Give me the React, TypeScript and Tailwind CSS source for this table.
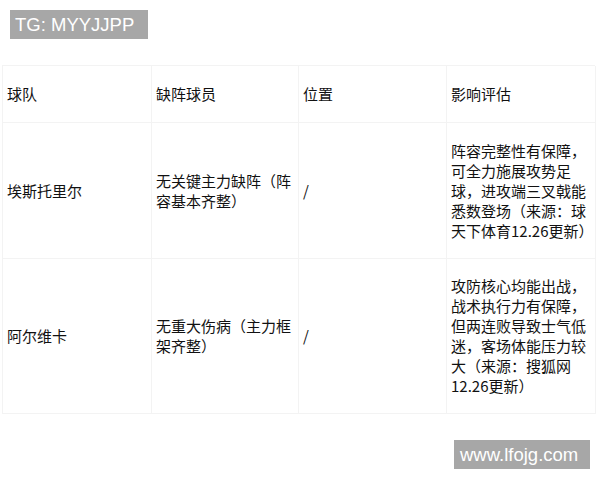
import React from "react";

const cjk = { fontFamily: '"Microsoft YaHei", "Noto Sans CJK SC", "Noto Sans", sans-serif' };

type Row = [string, string, string, string];

const header: Row = ["球队", "缺阵球员", "位置", "影响评估"];
const rows: Row[] = [
  [
    "埃斯托里尔",
    "无关键主力缺阵（阵容基本齐整）",
    "/",
    "阵容完整性有保障，可全力施展攻势足球，进攻端三叉戟能悉数登场（来源：球天下体育12.26更新）",
  ],
  [
    "阿尔维卡",
    "无重大伤病（主力框架齐整）",
    "/",
    "攻防核心均能出战，战术执行力有保障，但两连败导致士气低迷，客场体能压力较大（来源：搜狐网12.26更新）",
  ],
];

function Cells({ row, h }: { row: Row; h: string }) {
  return (
    <>
      {row.map((c, i) => (
        <div
          key={i}
          className={`flex items-center border-r border-b border-[#f3f3f3] pl-[4px] pr-[1px] text-[15px] leading-[20px] text-[#111] ${h}`}
        >
          <span className="block w-full">{c}</span>
        </div>
      ))}
    </>
  );
}

export default function App() {
  return (
    <div className="w-[600px] h-[480px] bg-white overflow-hidden" style={cjk}>
      <div className="pt-[10px] pl-[10px]">
        <div
          className="w-[138px] h-[29px] bg-[#a7a7a7] text-white text-[18.5px] leading-[29px] pl-[5px]"
          style={{ fontFamily: '"Liberation Sans", Arial, sans-serif' }}
        >
          TG: MYYJJPP
        </div>
      </div>
      <div className="mt-[26px] ml-[2px] w-[593px] grid grid-cols-[149px_147px_148px_149px] border-t border-l border-[#f3f3f3]">
        {header.map((c, i) => (
          <div
            key={i}
            className="flex items-center h-[57px] border-r border-b border-[#f3f3f3] pl-[4px] text-[15px] leading-[20px] text-[#111]"
          >
            {c}
          </div>
        ))}
        <Cells row={rows[0]} h="h-[136px]" />
        <Cells row={rows[1]} h="h-[155px]" />
      </div>
      <div className="flex justify-end pr-[10px] mt-[26px]">
        <div
          className="w-[136px] h-[29px] bg-[#a7a7a7] text-white text-[18.5px] leading-[29px] pl-[6px]"
          style={{ fontFamily: '"Liberation Sans", Arial, sans-serif' }}
        >
          www.lfojg.com
        </div>
      </div>
    </div>
  );
}
